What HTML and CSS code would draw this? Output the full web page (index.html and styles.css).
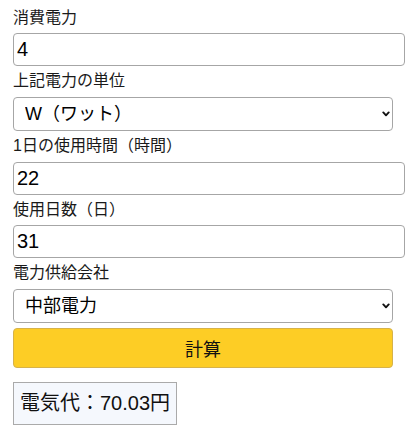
FILE: index.html
```html
<!DOCTYPE html>
<html lang="ja">
<head>
<meta charset="utf-8">
<title>電気代計算</title>
<link rel="stylesheet" href="styles.css">
</head>
<body>
<form class="calc">
  <label class="field-label" for="power">消費電力</label>
  <input class="text-input" id="power" type="text" value="4">

  <label class="field-label" for="unit">上記電力の単位</label>
  <div class="select-wrap">
    <select class="select-input" id="unit">
      <option>W（ワット）</option>
      <option>kW（キロワット）</option>
    </select>
    <svg class="chevron" width="8" height="6" viewBox="0 0 8 6" aria-hidden="true"><path d="M1.3 1.4 L4 4.3 L6.7 1.4" fill="none" stroke="#111" stroke-width="1.9" stroke-linecap="round" stroke-linejoin="round"/></svg>
  </div>

  <label class="field-label" for="hours">1日の使用時間（時間）</label>
  <input class="text-input" id="hours" type="text" value="22">

  <label class="field-label" for="days">使用日数（日）</label>
  <input class="text-input" id="days" type="text" value="31">

  <label class="field-label" for="company">電力供給会社</label>
  <div class="select-wrap">
    <select class="select-input" id="company">
      <option>中部電力</option>
      <option>東京電力</option>
    </select>
    <svg class="chevron" width="8" height="6" viewBox="0 0 8 6" aria-hidden="true"><path d="M1.3 1.4 L4 4.3 L6.7 1.4" fill="none" stroke="#111" stroke-width="1.9" stroke-linecap="round" stroke-linejoin="round"/></svg>
  </div>

  <button class="calc-button" type="button">計算</button>

  <div class="result">電気代：70.03円</div>
</form>
</body>
</html>
```

FILE: styles.css
```css
html, body {
  margin: 0;
  padding: 0;
  background: #ffffff;
}

body {
  font-family: "Liberation Sans", Arial, "Noto Sans CJK JP", sans-serif;
  color: #1a1a1a;
}

.calc {
  display: flex;
  flex-direction: column;
  align-items: flex-start;
  padding: 2.5px 0 0 13px;
}

.field-label {
  display: block;
  font-size: 16px;
  line-height: 20px;
  padding: 5px 0 5.5px;
  color: #1a1a1a;
}

.text-input {
  display: block;
  box-sizing: border-box;
  width: 392px;
  height: 33px;
  margin: 0;
  padding: 0 3px;
  border: 1px solid #a6a6a6;
  border-radius: 4px;
  background: #fff;
  font-family: "Liberation Sans", Arial, "Noto Sans CJK JP", sans-serif;
  font-size: 20px;
  color: #000;
  outline: none;
}

.select-wrap {
  position: relative;
  width: 380px;
}

.select-input {
  display: block;
  box-sizing: border-box;
  width: 380px;
  height: 34.5px;
  margin: 0;
  padding: 0 24px 0 11px;
  border: 1px solid #a6a6a6;
  border-radius: 4px;
  background: #fff;
  -webkit-appearance: none;
  appearance: none;
  font-family: "Liberation Sans", Arial, "Noto Sans CJK JP", sans-serif;
  font-size: 18px;
  color: #000;
}

.chevron {
  position: absolute;
  right: 3px;
  top: 50%;
  transform: translateY(-50%);
  pointer-events: none;
}

.calc-button {
  display: block;
  box-sizing: border-box;
  width: 380px;
  height: 40px;
  margin: 5px 0 0;
  padding: 0;
  border: 1px solid #d6b24a;
  border-radius: 4px;
  background: #fdcd25;
  font-family: "Liberation Sans", Arial, "Noto Sans CJK JP", sans-serif;
  font-size: 18px;
  color: #111;
  cursor: pointer;
}

.result {
  box-sizing: border-box;
  margin-top: 14px;
  padding: 9px 6px;
  border: 1px solid #aaaaaa;
  background: #f5f8fd;
  font-size: 20px;
  line-height: 23px;
  color: #111;
}
```
